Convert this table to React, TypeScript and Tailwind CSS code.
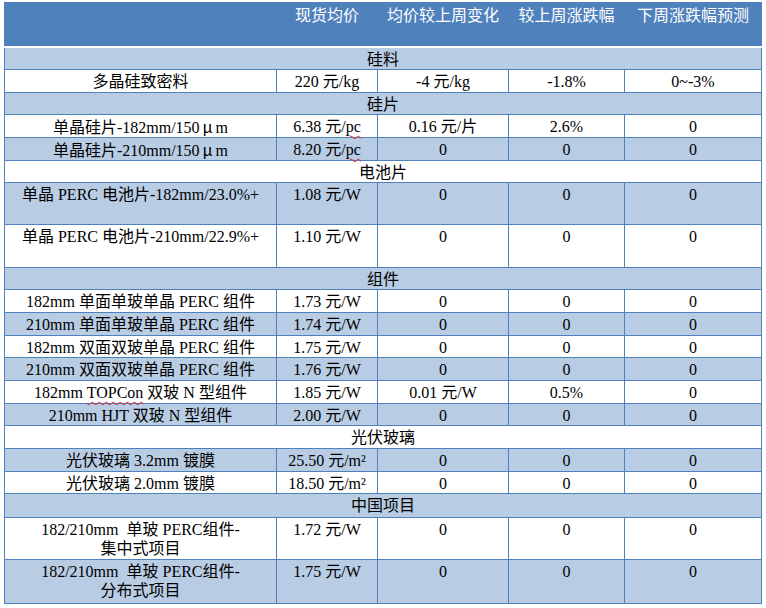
import React from "react";

type Row =
  | { t: "s"; label: string; blue: boolean; h: string }
  | { t: "d"; cells: React.ReactNode[]; blue: boolean; h: string };

const Mu = () => (
  <span className="inline-block w-[16px] text-center font-['Noto_Sans_CJK_SC',sans-serif]">μ</span>
);

const Wavy = ({ children }: { children: React.ReactNode }) => (
  <span className="underline decoration-wavy decoration-[#e02020] decoration-1 underline-offset-[3px]">{children}</span>
);

const rows: Row[] = [
  { t: "s", label: "硅料", blue: true, h: "h-[22px]" },
  { t: "d", cells: ["多晶硅致密料", "220 元/kg", "-4 元/kg", "-1.8%", "0~-3%"], blue: false, h: "h-[23px]" },
  { t: "s", label: "硅片", blue: true, h: "h-[22px]" },
  {
    t: "d",
    cells: [
      <>单晶硅片-182mm/150<Mu />m</>,
      <>6.38 元/<Wavy>pc</Wavy></>,
      "0.16 元/片",
      "2.6%",
      "0",
    ],
    blue: false,
    h: "h-[23px]",
  },
  {
    t: "d",
    cells: [<>单晶硅片-210mm/150<Mu />m</>, <>8.20 元/<Wavy>pc</Wavy></>, "0", "0", "0"],
    blue: true,
    h: "h-[23px]",
  },
  { t: "s", label: "电池片", blue: false, h: "h-[22px]" },
  { t: "d", cells: ["单晶 PERC 电池片-182mm/23.0%+", "1.08 元/W", "0", "0", "0"], blue: true, h: "h-[42px]" },
  { t: "d", cells: ["单晶 PERC 电池片-210mm/22.9%+", "1.10 元/W", "0", "0", "0"], blue: false, h: "h-[43px]" },
  { t: "s", label: "组件", blue: true, h: "h-[22px]" },
  { t: "d", cells: ["182mm 单面单玻单晶 PERC 组件", "1.73 元/W", "0", "0", "0"], blue: false, h: "h-[23px]" },
  { t: "d", cells: ["210mm 单面单玻单晶 PERC 组件", "1.74 元/W", "0", "0", "0"], blue: true, h: "h-[23px]" },
  { t: "d", cells: ["182mm 双面双玻单晶 PERC 组件", "1.75 元/W", "0", "0", "0"], blue: false, h: "h-[22px]" },
  { t: "d", cells: ["210mm 双面双玻单晶 PERC 组件", "1.76 元/W", "0", "0", "0"], blue: true, h: "h-[23px]" },
  {
    t: "d",
    cells: [<>182mm <Wavy>TOPCon</Wavy> 双玻 N 型组件</>, "1.85 元/W", "0.01 元/W", "0.5%", "0"],
    blue: false,
    h: "h-[23px]",
  },
  { t: "d", cells: ["210mm HJT 双玻 N 型组件", "2.00 元/W", "0", "0", "0"], blue: true, h: "h-[22px]" },
  { t: "s", label: "光伏玻璃", blue: false, h: "h-[23px]" },
  { t: "d", cells: ["光伏玻璃 3.2mm 镀膜", "25.50 元/m²", "0", "0", "0"], blue: true, h: "h-[23px]" },
  { t: "d", cells: ["光伏玻璃 2.0mm 镀膜", "18.50 元/m²", "0", "0", "0"], blue: false, h: "h-[22px]" },
  { t: "s", label: "中国项目", blue: true, h: "h-[24px]" },
  {
    t: "d",
    cells: [<>182/210mm&nbsp; 单玻 PERC组件-<br />集中式项目</>, "1.72 元/W", "0", "0", "0"],
    blue: false,
    h: "h-[42px]",
  },
  {
    t: "d",
    cells: [<>182/210mm&nbsp; 单玻 PERC组件-<br />分布式项目</>, "1.75 元/W", "0", "0", "0"],
    blue: true,
    h: "h-[44px]",
  },
];

const headers = ["", "现货均价", "均价较上周变化", "较上周涨跌幅", "下周涨跌幅预测"];

export default function App() {
  const cell = "border border-[#4f81bd] px-1 pt-[2px] align-top text-center whitespace-nowrap";
  return (
    <div className="w-[766px] h-[608px] overflow-hidden bg-white text-black font-['Liberation_Serif','Noto_Sans_CJK_SC',serif] text-[16px] leading-[19px]">
      <div className="pl-[4px] pt-[2px]">
        <table className="w-[757px] table-fixed border-collapse">
          <colgroup>
            <col className="w-[272px]" />
            <col className="w-[101px]" />
            <col className="w-[131px]" />
            <col className="w-[116px]" />
            <col className="w-[137px]" />
          </colgroup>
          <thead>
            <tr className="h-[44px]">
              {headers.map((h, i) => (
                <th
                  key={i}
                  className="bg-[#4f81bd] border-x border-t border-[#4f81bd] border-b-[2px] border-b-white pt-[2px] align-top text-center font-normal text-white whitespace-nowrap font-['Noto_Sans_CJK_SC',sans-serif]"
                >
                  {h}
                </th>
              ))}
            </tr>
          </thead>
          <tbody>
            {rows.map((r, i) =>
              r.t === "s" ? (
                <tr key={i} className={r.h}>
                  <td colSpan={5} className={`${cell} ${r.blue ? "bg-[#b8cce4]" : "bg-white"}`}>
                    {r.label}
                  </td>
                </tr>
              ) : (
                <tr key={i} className={r.h}>
                  {r.cells.map((c, j) => (
                    <td key={j} className={`${cell} ${r.blue ? "bg-[#b8cce4]" : "bg-white"}`}>
                      {c}
                    </td>
                  ))}
                </tr>
              )
            )}
          </tbody>
        </table>
        <p className="pl-[96px] pt-[3px] leading-[19px] whitespace-nowrap">注：以上价格为含税价格，数据来源于 InfoLink Consulting</p>
      </div>
    </div>
  );
}
